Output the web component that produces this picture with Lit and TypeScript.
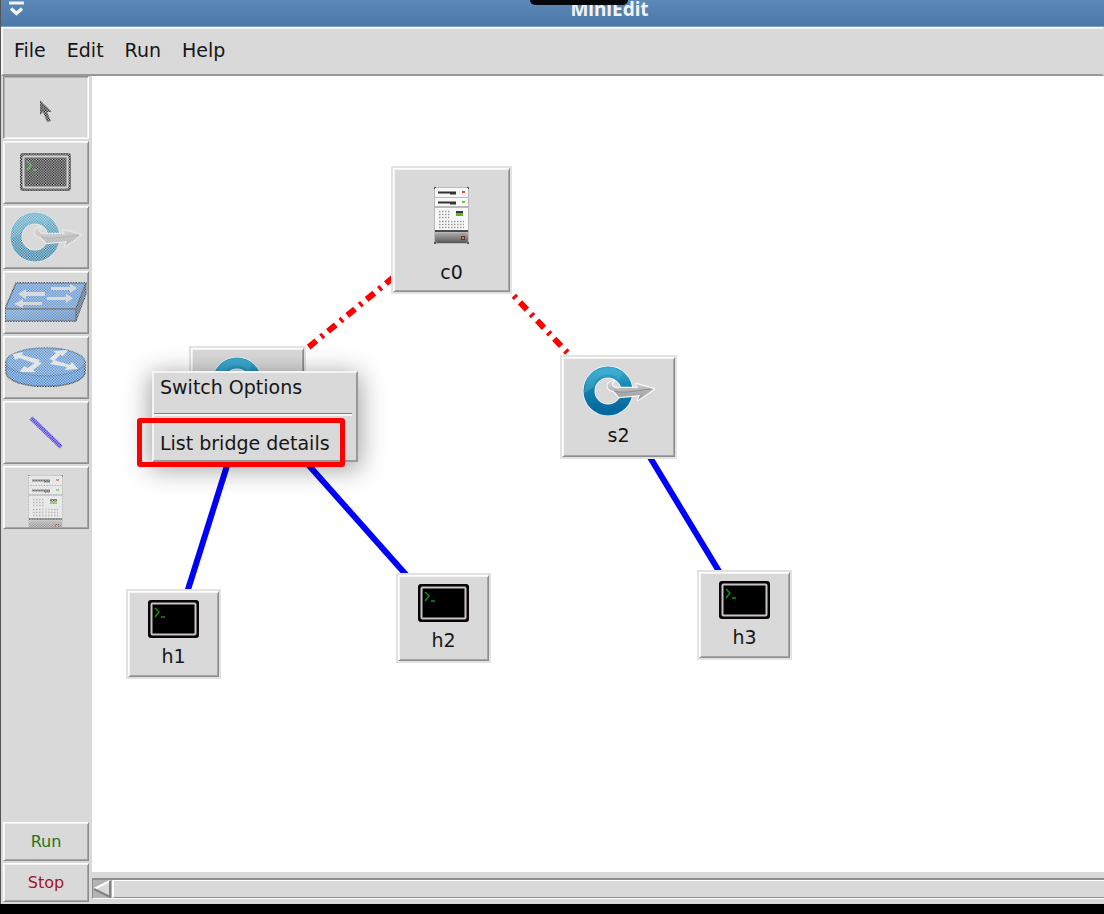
import { LitElement, html, svg, css } from "lit";
import { customElement, property } from "lit/decorators.js";

const stipple = svg`
  <defs>
    <pattern id="stipple" width="2.667" height="2.667" patternUnits="userSpaceOnUse">
      <path d="M0 0h1.400v1.400H0zM1.333 1.333h1.334v1.334H1.333z" fill="#d9d9d9" />
    </pattern>
  </defs>
  <rect width="82" height="58" fill="url(#stipple)" />`;

const gradients = svg`
  <defs>
    <linearGradient id="ring" x1="0" y1="0" x2="0" y2="1">
      <stop offset="0" stop-color="#2fa3cb" />
      <stop offset=".45" stop-color="#1580ae" />
      <stop offset="1" stop-color="#0369a0" />
    </linearGradient>
    <linearGradient id="metal" x1="0" y1="0" x2="0" y2="1">
      <stop offset="0" stop-color="#d8d8da" />
      <stop offset=".5" stop-color="#b4b4b7" />
      <stop offset="1" stop-color="#98989c" />
    </linearGradient>
    <linearGradient id="base" x1="0" y1="0" x2="0" y2="1">
      <stop offset="0" stop-color="#a8a8a8" />
      <stop offset="1" stop-color="#5c5c5c" />
    </linearGradient>
    <linearGradient id="face" x1="0" y1="0" x2="1" y2="1">
      <stop offset="0" stop-color="#4f9be8" />
      <stop offset="1" stop-color="#1c63b4" />
    </linearGradient>
  </defs>`;

const switchShape = svg`
  <circle cx="25" cy="25" r="19" fill="none" stroke="#f4f8fa" stroke-width="12.500" />
  <circle cx="25" cy="25" r="19" fill="none" stroke="url(#ring)" stroke-width="11" />
  <path d="M1 27A24 24 0 0 1 40 7L36 14A14 14 0 0 0 11 21Z" fill="#55b7d8" opacity=".4" />
  <path d="M31 15C22 16 23 24 31 25L36 31L57 29L55 34L71 23L53 18L55 22L37 22C30 23 26 18 31 15Z"
    fill="url(#metal)" stroke="#f6f6f6" stroke-width="2.500" stroke-linejoin="round" />
  <path d="M31 15C22 16 23 24 31 25L36 31L57 29L55 34L71 23L53 18L55 22L37 22C30 23 26 18 31 15Z" fill="url(#metal)" />
  <path d="M31 25C40 28 50 25 68 23" fill="none" stroke="#8a8a8f" stroke-width="1" />`;

const terminalShape = svg`
  <rect x="0" y="0" width="51" height="38" rx="3" fill="#090507" />
  <rect x="3.500" y="3.500" width="44" height="31" rx="1" fill="#000" stroke="#c9c5c7" stroke-width="2" />
  <path d="M7 8L11 12L7 17M13 17H17" fill="none" stroke="#079b0d" stroke-width="1.400" />`;

const serverShape = svg`
  <rect x="0" y="0" width="35" height="57" fill="#b9b9b9" />
  <path d="M0 0h2v2H0zM33 0h2v2h-2zM0 55h2v2H0zM33 55h2v2h-2z" fill="#555" />
  <rect x="1" y="1" width="33" height="9" fill="#f7f7f7" />
  <rect x="1" y="11" width="33" height="8" fill="#f7f7f7" />
  <rect x="1" y="21" width="33" height="22" fill="#f9f9f9" />
  <path d="M4 5.500H22M4 15.500H22" stroke="#333" stroke-width="2" />
  <path d="M16 6.500H22M16 16.500H22" stroke="#333" stroke-width="2" />
  <rect x="28" y="4" width="3" height="2" fill="#d44" />
  <rect x="28" y="14" width="3" height="2" fill="#6c3" />
  <path d="M5 24.500H17M5 27.500H17M5 30.500H17" stroke="#999" stroke-width="1.500" stroke-dasharray="1.500 1.500" />
  <path d="M5 34.500H30M5 37.500H30M5 40.500H30" stroke="#999" stroke-width="1.500" stroke-dasharray="1.500 1.500" />
  <rect x="22" y="24" width="7" height="2" fill="#383838" />
  <rect x="22" y="26" width="7" height="3" fill="#63b516" />
  <rect x="1" y="43" width="33" height="2" fill="#4b4b4b" />
  <rect x="1" y="46" width="33" height="10" rx="3" fill="url(#base)" />
  <path d="M4 55H31" stroke="#585858" stroke-width="1" />
  <rect x="27" y="49" width="4" height="4" fill="#5b362d" />
  <rect x="28" y="50" width="2" height="2" fill="#b85" />`;

const toolShapes: Record<string, unknown> = {
  Select: svg`<path d="M35 21V36L38 33L42 43L46 42L42 33H47Z" fill="#000" />`,
  Host: svg`<g transform="translate(15 9)">${terminalShape}</g>`,
  Switch: svg`<g transform="translate(5 3)">${switchShape}</g>`,
  LegacySwitch: svg`
    <path d="M11 9H81L71 35H0Z" fill="#3a86e0" stroke="#10233c" stroke-width="1.500" />
    <path d="M0 35H71V47H0Z" fill="url(#face)" stroke="#10233c" stroke-width="1.500" />
    <path d="M71 35L81 9V20L71 47Z" fill="#164778" stroke="#111" />
    <path d="M46 13H65V10L72 14L65 19V16H46ZM40 18H21V15L13 20L21 25V22H40ZM42 23H61V20L68 24L61 29V26H42ZM37 28H18V25L9 30L18 34V31H37Z" fill="#d6dae0" />`,
  LegacyRouter: svg`
    <path d="M1 23V33C1 52 80 52 80 33V23Z" fill="#1c7ae4" stroke="#10233c" stroke-width="1.500" />
    <ellipse cx="40.500" cy="23" rx="39.500" ry="14" fill="#3a86e0" stroke="#20528c" stroke-width="1.500" />
    <path d="M8 15L18 13L17 16L35 21L32 25L14 19L10 21ZM63 11L58 17L55 16L49 22L44 20L51 14L48 12ZM15 33L19 27L23 29L32 22L37 24L28 31L31 33ZM73 30L60 31L62 28L45 25L49 21L65 26L67 23Z" fill="#f0f2f5" />`,
  NetLink: svg`<path d="M26 14L56 43" stroke="#1400ff" stroke-width="4.500" />`,
  Controller: svg`<g transform="translate(23 6)">${serverShape}</g>`,
};

const nodeShapes: Record<string, unknown> = {
  controller: svg`<svg width="35" height="57" aria-hidden="true">${gradients}${serverShape}</svg>`,
  switch: svg`<svg width="72" height="51" aria-hidden="true">${gradients}${switchShape}</svg>`,
  host: svg`<svg width="51" height="38" aria-hidden="true">${terminalShape}</svg>`,
};

@customElement("net-node")
class NetNode extends LitElement {
  @property() kind = "host";
  @property() name = "";

  static styles = css`
    :host { display: block; }
    .node {
      display: flex; flex-direction: column; align-items: center;
      box-sizing: border-box; width: 100%; height: 100%; margin: 0;
      background: #d9d9d9; color: #161616;
      border: 1px solid; border-color: #fff #8d8d8d #8d8d8d #fff;
      box-shadow: inset 1px 1px #f4f4f4, inset -1px -1px #a6a6a6, 0 0 0 2px #e2e2e2;
      font: 19px/24px "DejaVu Sans", sans-serif;
    }
    .controller { padding: 18px 0 0; gap: 16px; }
    .switch { padding: 8px 0 0; gap: 6px; }
    .host { padding: 8px 0 0; gap: 6px; }
    svg { display: block; flex: none; }
  `;

  render() {
    return html`<button class="node ${this.kind}">${nodeShapes[this.kind]}<span>${this.name}</span></button>`;
  }
}

@customElement("tool-button")
class ToolButton extends LitElement {
  @property() tool = "Select";
  @property({ type: Boolean }) active = false;

  static styles = css`
    :host { display: block; }
    .tool {
      display: block; box-sizing: border-box; width: 100%; height: 63px; padding: 1px; overflow: hidden;
      background: #d9d9d9; border: 1px solid; border-color: #fff #8d8d8d #8d8d8d #fff;
      box-shadow: inset 1px 1px #f0f0f0, inset -1px -1px #a6a6a6;
    }
    .active { border-color: #8d8d8d #fff #fff #8d8d8d; box-shadow: inset 1px 1px #b4b4b4, inset -1px -1px #f0f0f0; }
    svg { display: block; }
  `;

  render() {
    return html`<button class="tool ${this.active ? "active" : ""}" aria-pressed=${this.active ? "true" : "false"}>
      <svg width="82" height="58" viewBox="0 0 82 58" aria-hidden="true">${gradients}${toolShapes[this.tool]}${stipple}</svg>
    </button>`;
  }
}

@customElement("app-root")
class AppRoot extends LitElement {
  static styles = css`
    :host {
      display: flex; flex-direction: column; box-sizing: border-box; height: 100vh; overflow: hidden;
      background: #000; padding-bottom: 10px;
      font: 19px/24px "DejaVu Sans", sans-serif; color: #161616;
    }
    button { font: inherit; color: inherit; background: none; border: 0; padding: 0; margin: 0; text-align: left; }
    .window { flex: 1; min-height: 0; display: flex; flex-direction: column; background: #d9d9d9; border-left: 1px solid #555; }
    .titlebar {
      position: relative; display: flex; align-items: flex-start; height: 27px; flex: none;
      box-sizing: border-box; border-bottom: 1px solid #7da2c6;
      background: linear-gradient(#5b88b6, #4c78a7); color: #f2f2f2;
    }
    .shade { padding-left: 7px; }
    .shade svg { display: block; }
    .title { flex: 1; margin: 0; padding-left: 91px; text-align: center; font: bold 19px/18px "Noto Sans", sans-serif; }
    .notch { position: absolute; top: 0; left: 529px; width: 98px; height: 5px; background: #05080b; border-radius: 0 0 6px 6px; }
    .menubar {
      display: flex; align-items: center; gap: 21px; height: 49px; flex: none; box-sizing: border-box;
      padding: 0 11px 4px; border: 2px solid; border-color: #f4f4f4 transparent #989898 #f4f4f4;
    }
    .body { flex: 1; min-height: 0; display: flex; }
    .toolbar { width: 86px; flex: none; display: flex; flex-direction: column; gap: 2px; padding: 0 3px 2px 2px; }
    .spacer { flex: 1; }
    .action {
      height: 39px; box-sizing: border-box; text-align: center; font-size: 16px; line-height: 20px;
      border: 1px solid; border-color: #fff #8d8d8d #8d8d8d #fff;
      box-shadow: inset 1px 1px #f0f0f0, inset -1px -1px #a6a6a6;
    }
    .run { color: #1c7420; }
    .stop { color: #a31525; }
    .main { flex: 1; min-width: 0; display: flex; flex-direction: column; }
    .canvas { position: relative; flex: 1; min-height: 0; overflow: hidden; background: #fff; }
    .links { position: absolute; inset: 0; width: 100%; height: 100%; }
    .control { stroke: #f00; stroke-width: 6; stroke-dasharray: 10 6 3 6; }
    .data { stroke: #00f; stroke-width: 6; }
    net-node { position: absolute; }
    .c0 { left: 301px; top: 92px; width: 117px; height: 124px; }
    .s1 { left: 99px; top: 272px; width: 113px; height: 100px; }
    .s2 { left: 470px; top: 281px; width: 113px; height: 100px; }
    .h1 { left: 36px; top: 515px; width: 91px; height: 86px; }
    .h2 { left: 306px; top: 499px; width: 91px; height: 86px; }
    .h3 { left: 607px; top: 496px; width: 91px; height: 86px; }
    .popup {
      position: absolute; left: 60px; top: 295px; width: 206px; box-sizing: border-box;
      display: flex; flex-direction: column; background: #d9d9d9;
      border: 2px solid; border-color: #f4f4f4 #989898 #989898 #f4f4f4;
      box-shadow: 0 5px 24px 2px rgba(0, 0, 0, .38);
    }
    .item { height: 28px; padding: 0 6px; white-space: nowrap; }
    .rule { width: 198px; box-sizing: border-box; height: 3px; margin: 12px 0 14px; border: 0; border-top: 1px solid #808080; border-bottom: 2px solid #f4f4f4; }
    .item:last-child { height: 30px; padding-bottom: 4px; }
    .marker { position: absolute; left: 45px; top: 342px; width: 208px; height: 49px; box-sizing: border-box; border: 5px solid #f00; border-radius: 3px; }
    .scroll {
      display: flex; height: 21px; flex: none; box-sizing: border-box; margin: 6px 0 5px;
      background: #b3b3b3; border: 1px solid; border-width: 2px 0 1px 1px; border-color: #8d8d8d #fff #fff #8d8d8d;
    }
    .arrow { width: 19px; flex: none; }
    .arrow svg { display: block; }
    .thumb { flex: 1; background: #d9d9d9; border: 1px solid; border-width: 1px 0 1px 2px; border-color: #fff #8d8d8d #8d8d8d #fff; }
  `;

  render() {
    return html`
      <div class="window">
        <header class="titlebar">
          <button class="shade" aria-label="Shade">
            <svg width="16" height="18" fill="none" stroke="#f2f2f2"><path d="M1 3H16" stroke-width="3" /><path d="M3 8.500L8.500 13.500L14 8.500" stroke-width="3.500" /></svg>
          </button>
          <h1 class="title">MiniEdit</h1>
          <div class="notch"></div>
        </header>
        <nav class="menubar">
          ${["File", "Edit", "Run", "Help"].map((m) => html`<button>${m}</button>`)}
        </nav>
        <div class="body">
          <div class="toolbar">
            ${Object.keys(toolShapes).map((t, i) => html`<tool-button .tool=${t} .active=${i === 0}></tool-button>`)}
            <div class="spacer"></div>
            <button class="action run">Run</button>
            <button class="action stop">Stop</button>
          </div>
          <main class="main">
            <div class="canvas">
              <svg class="links" aria-hidden="true">
                <path class="control" d="M359.500 153.500L155.500 321.500" />
                <path class="control" d="M359.500 153.500L526.500 331" />
                <path class="data" d="M156.500 321.500L82 558" />
                <path class="data" d="M156.500 321.500L352.500 542" />
                <path class="data" d="M527.500 331L653.500 539" />
              </svg>
              <net-node class="c0" kind="controller" name="c0"></net-node>
              <net-node class="s1" kind="switch"></net-node>
              <net-node class="s2" kind="switch" name="s2"></net-node>
              <net-node class="h1" kind="host" name="h1"></net-node>
              <net-node class="h2" kind="host" name="h2"></net-node>
              <net-node class="h3" kind="host" name="h3"></net-node>
              <div class="popup">
                <button class="item">Switch Options</button>
                <hr class="rule" />
                <button class="item">List bridge details</button>
              </div>
              <div class="marker"></div>
            </div>
            <div class="scroll">
              <button class="arrow" aria-label="Scroll left">
                <svg width="19" height="18"><path d="M1 9L17 1V17Z" fill="#d9d9d9" /><path d="M1 9L17 1" stroke="#fff" stroke-width="2" /><path d="M17 1V17L1 9" fill="none" stroke="#808080" stroke-width="2" /></svg>
              </button>
              <div class="thumb"></div>
            </div>
          </main>
        </div>
      </div>`;
  }
}
